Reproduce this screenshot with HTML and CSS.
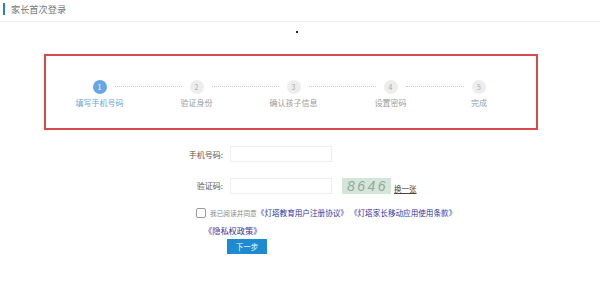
FILE: index.html
```html
<!DOCTYPE html>
<html lang="zh">
<head>
<meta charset="utf-8">
<title>家长首次登录</title>
<link rel="stylesheet" href="styles.css">
</head>
<body>
<header class="head">
  <span class="head-bar"></span>
  <span class="head-title">家长首次登录</span>
</header>
<div class="dot-row"><span class="dot"></span></div>
<section class="steps-box">
  <ol class="steps">
    <li class="step active"><span class="circle">1</span><span class="label">填写手机号码</span></li>
    <li class="step"><span class="circle">2</span><span class="label">验证身份</span></li>
    <li class="step"><span class="circle">3</span><span class="label">确认孩子信息</span></li>
    <li class="step step-short"><span class="circle">4</span><span class="label">设置密码</span></li>
    <li class="step last"><span class="circle">5</span><span class="label">完成</span></li>
  </ol>
</section>
<form class="form">
  <div class="row row-phone">
    <label class="lbl">手机号码:</label>
    <input class="inp" type="text">
  </div>
  <div class="row row-code">
    <label class="lbl">验证码:</label>
    <input class="inp" type="text">
    <span class="captcha">8646</span>
    <a class="refresh">换一张</a>
  </div>
  <div class="agree">
    <span class="chk"></span>
    <span class="agree-text">我已阅读并同意</span>
    <a class="link">《灯塔教育用户注册协议》</a>
    <a class="link link2">《灯塔家长移动应用使用条款》</a>
  </div>
  <div class="privacy"><a class="link link-p">《隐私权政策》</a></div>
  <div class="btn-row"><button type="button" class="btn">下一步</button></div>
</form>
</body>
</html>
```
FILE: styles.css
```css
* { box-sizing: border-box; }
html, body { margin: 0; padding: 0; background: #fff; }
body {
  width: 600px;
  height: 281px;
  overflow: hidden;
  font-family: "Noto Sans CJK SC", "Noto Sans", sans-serif;
  color: #666;
}
.head {
  height: 22px;
  border-bottom: 1px solid #f0f0f0;
  display: flex;
  align-items: flex-start;
  padding-top: 3px;
  padding-left: 3px;
}
.head-bar {
  width: 2px;
  height: 12px;
  background: #2f7fb8;
}
.head-title {
  margin-left: 6px;
  font-size: 9.2px;
  line-height: 12px;
  color: #777;
}
.dot-row {
  height: 32px;
  position: relative;
}
.dot {
  position: absolute;
  left: 296px;
  top: 9px;
  width: 2px;
  height: 2px;
  background: #222;
}
.steps-box {
  margin-left: 44px;
  width: 494px;
  height: 76px;
  border: 2px solid #d9484a;
  padding-top: 24px;
}
.steps {
  list-style: none;
  margin: 0;
  padding: 0 0 0 5px;
  display: flex;
}
.step {
  position: relative;
  width: 97px;
  display: flex;
  flex-direction: column;
  align-items: center;
}
.step.last { width: 80px; }
.step:not(.last)::after {
  content: "";
  position: absolute;
  top: 6px;
  left: calc(50% + 15px);
  width: 67px;
  border-top: 1px dotted #c8c8c8;
}
.step.step-short::after { width: 58px; }
.circle {
  width: 14px;
  height: 14px;
  border-radius: 50%;
  background: #ededed;
  color: #aaa;
  font-size: 7px;
  line-height: 14px;
  text-align: center;
}
.label {
  margin-top: 3px;
  font-size: 8px;
  line-height: 11px;
  color: #9a9a9a;
  white-space: nowrap;
}
.step.active .circle { background: #67a6e6; color: #fff; }
.step.active .label { color: #6aa2da; }

.form {
  margin-top: 16px;
  padding-left: 180px;
}
.row {
  display: flex;
  align-items: center;
}
.lbl {
  width: 46px;
  text-align: right;
  font-size: 8px;
  color: #555;
  padding-right: 3px;
}
.inp {
  width: 102px;
  height: 16px;
  border: 1px solid #eeeeee;
  margin: 0 0 0 4px;
  padding: 0;
  outline: none;
}
.row-code { margin-top: 15px; }
.captcha {
  margin-left: 10px;
  width: 49px;
  height: 16px;
  background: #d3e6d9;
  color: #98a69b;
  font-family: "Liberation Sans", sans-serif;
  font-style: italic;
  font-weight: normal;
  font-size: 14px;
  line-height: 16px;
  letter-spacing: 2.5px;
  text-indent: 2px;
  text-align: center;
}
.refresh {
  margin-left: 3px;
  margin-top: 6px;
  font-size: 7.5px;
  color: #444;
  text-decoration: underline;
}
.agree {
  margin-top: 13px;
  margin-left: 16px;
  display: flex;
  align-items: center;
}
.chk {
  width: 10px;
  height: 10px;
  border: 1px solid #999;
  border-radius: 2px;
}
.agree-text {
  margin-left: 4px;
  font-size: 6.7px;
  color: #888;
}
.link {
  font-size: 7.6px;
  color: #34349e;
}
.link2 { margin-left: 2px; }
.privacy {
  margin-top: 3px;
  margin-left: 24px;
  line-height: 12px;
}
.link-p { font-size: 8.2px; }
.btn-row {
  display: flex;
  margin-top: 3px;
  margin-left: 47px;
}
.btn {
  width: 40px;
  height: 15px;
  border: none;
  padding: 0;
  background: #1d8ad2;
  color: #fff;
  font-family: "Noto Sans CJK SC", sans-serif;
  font-size: 7.5px;
  line-height: 15px;
}
```
